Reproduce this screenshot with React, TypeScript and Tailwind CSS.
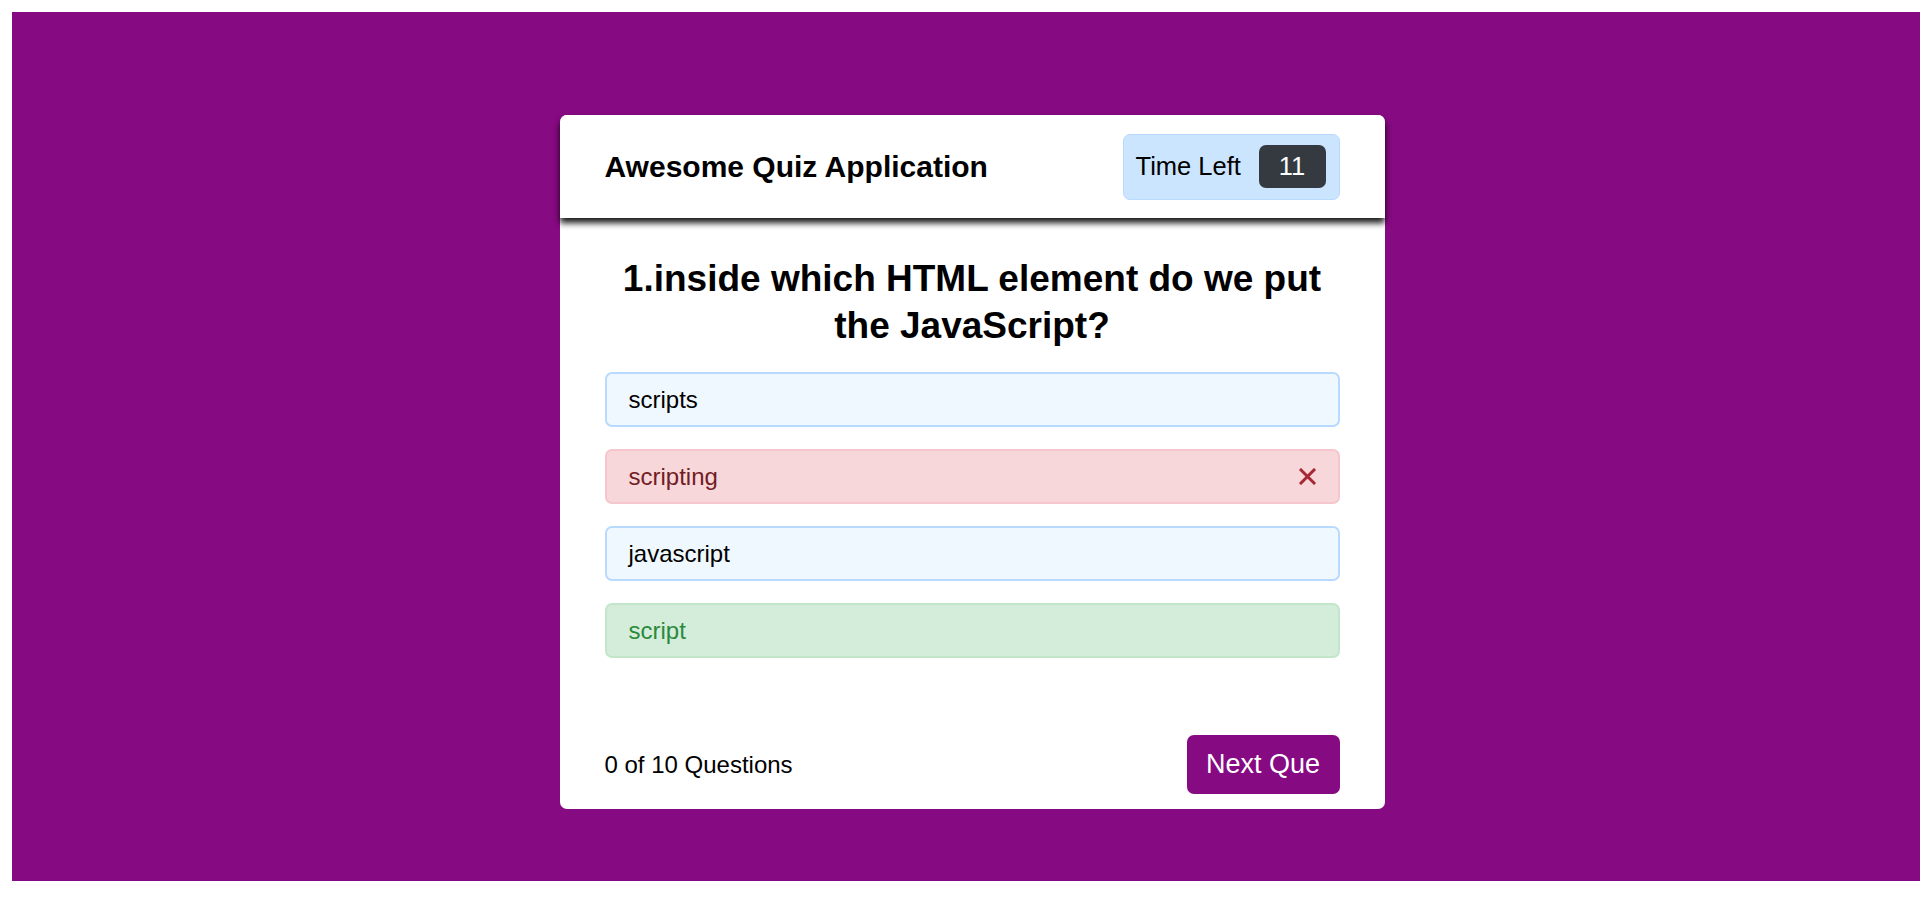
import React, { useState } from "react";

const options = [
  { text: "scripts", state: "idle" },
  { text: "scripting", state: "wrong" },
  { text: "javascript", state: "idle" },
  { text: "script", state: "right" },
];

export default function App() {
  const [time] = useState(11);

  return (
    <div className="w-full h-[906px] overflow-hidden bg-white pl-[12px] pt-[12px] font-['Liberation_Sans',Arial,sans-serif]">
      <div className="w-[1920px] h-[869px] bg-[#860a82] flex justify-center pt-[103px]">
        <div className="w-[825px] h-[694px] bg-white rounded-[7px] flex flex-col">
          {/* Header */}
          <header className="relative z-10 h-[103px] shrink-0 bg-white rounded-t-[7px] px-[45px] flex items-center justify-between shadow-[0_5px_6px_0_rgba(0,0,0,0.9)]">
            <h1 className="text-[30px] font-bold text-black">Awesome Quiz Application</h1>
            <div className="w-[217px] h-[66px] bg-[#cce5ff] border border-[#b8daff] rounded-[7px] flex items-center justify-between pl-[12px] pr-[13px]">
              <span className="text-[25.5px] text-black">Time Left</span>
              <span className="w-[67px] h-[43px] bg-[#343a40] rounded-[7px] flex items-center justify-center text-[25.5px] text-white">
                {time}
              </span>
            </div>
          </header>

          {/* Question + options */}
          <section className="flex-1 px-[45px] pt-[37px]">
            <h2 className="text-[37px] leading-[47px] font-bold text-center text-black">
              1.inside which HTML element do we put the JavaScript?
            </h2>
            <div className="mt-[23px] flex flex-col gap-[22px]">
              {options.map((o) => (
                <div
                  key={o.text}
                  className={`h-[55px] rounded-[7px] border-2 pl-[22px] pr-[20px] flex items-center justify-between text-[24px] ${
                    o.state === "wrong"
                      ? "bg-[#f8d7da] border-[#f5c6cb] text-[#721c24]"
                      : o.state === "right"
                        ? "bg-[#d4edda] border-[#c3e6cb] text-[#2a8a3c]"
                        : "bg-[#f0f8ff] border-[#b8daff] text-black"
                  }`}
                >
                  <span>{o.text}</span>
                  {o.state === "wrong" && (
                    <svg width="17" height="17" viewBox="0 0 17 17" className="mr-[2px]">
                      <path d="M2 2 L15 15 M15 2 L2 15" stroke="#a52834" strokeWidth="3" strokeLinecap="square" />
                    </svg>
                  )}
                </div>
              ))}
            </div>
          </section>

          {/* Footer */}
          <footer className="h-[89px] shrink-0 px-[45px] flex items-center justify-between">
            <span className="text-[24px] text-black">0 of 10 Questions</span>
            <button className="w-[153px] h-[59px] bg-[#860a82] rounded-[7px] text-white text-[27px]">
              Next Que
            </button>
          </footer>
        </div>
      </div>
    </div>
  );
}
